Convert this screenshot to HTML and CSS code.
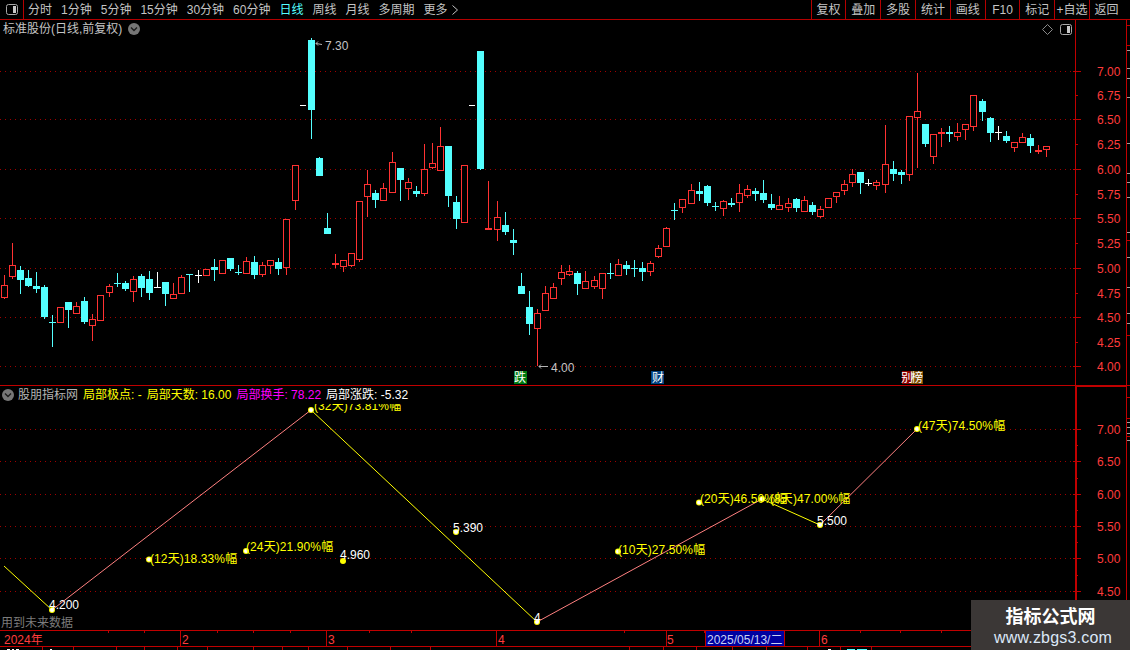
FILE: index.html
```html
<!DOCTYPE html>
<html lang="zh">
<head>
<meta charset="utf-8">
<title>标准股份 日线</title>
<link rel="stylesheet" href="styles.css">
</head>
<body>
<div class="app">
  <header class="toolbar">
    <div class="toolbar-icon">
      <svg class="panel-icon" width="12" height="11" viewBox="0 0 12 11"><rect class="panel-frame" x="0.5" y="0.5" width="11" height="10" rx="2"/><rect class="panel-bar" x="7" y="2" width="3" height="7"/></svg>
    </div>
    <nav class="periods">
      <span>分时</span><span>1分钟</span><span>5分钟</span><span>15分钟</span><span>30分钟</span><span>60分钟</span>
      <span class="active">日线</span><span>周线</span><span>月线</span><span>多周期</span>
      <span class="more">更多<svg width="6" height="10" viewBox="0 0 6 10"><path class="more-arrow" d="M0.5 0.5L5.5 5L0.5 9.5"/></svg></span>
    </nav>
    <nav class="tools">
      <span>复权</span><span>叠加</span><span>多股</span><span>统计</span><span>画线</span><span>F10</span><span>标记</span><span>+自选</span><span class="tool-last">返回</span>
    </nav>
  </header>

  <section class="pane pane-price">
    <div class="pane-title">
      <span class="stock">标准股份(日线,前复权)</span>
      <svg class="chev" width="12" height="12" viewBox="0 0 12 12"><circle class="chev-disc" cx="6" cy="6" r="6"/><path class="chev-mark" d="M3 4.5L6 7.5L9 4.5"/></svg>
      <span class="title-icons">
        <svg width="11" height="11" viewBox="0 0 11 11"><path class="diamond" d="M5.5 0.5L10.5 5.5L5.5 10.5L0.5 5.5Z"/></svg>
        <svg class="panel-icon" width="12" height="11" viewBox="0 0 12 11"><rect class="panel-frame" x="0.5" y="0.5" width="11" height="10" rx="2"/><rect class="panel-bar" x="7" y="2" width="3" height="7"/></svg>
      </span>
    </div>
    <svg class="canvas" width="1130" height="365" viewBox="0 20 1130 365">
      <path class="grid" d="M0 71.5H1075M0 119.5H1075M0 169.5H1075M0 218.5H1075M0 268.5H1075M0 317.5H1075M0 366.5H1075"/>
      <path class="axis" d="M1075.5 20V385M1126.5 20V385M1073 71.5h8M1073 119.5h8M1073 169.5h8M1073 218.5h8M1073 268.5h8M1073 317.5h8M1073 366.5h8M1076 95.5h2M1076 144.5h2M1076 194.5h2M1076 243.5h2M1076 293.5h2M1076 342.5h2M1127 25.5h3M1127 45.5h3M1127 240.5h3M1127 335.5h3"/>
      <path class="side-marks" d="M1127 50.5h3M1127 68.5h3M1127 78.5h3M1127 97.5h3M1127 143.5h3M1127 173.5h3M1127 182.5h3M1127 197.5h3M1127 232.5h3M1127 257.5h3M1127 287.5h3M1127 313.5h3M1127 323.5h3"/>
      <g id="candles"></g>
      <path class="note-line" d="M300 105.5h6M469 105.5h6"/>
      <path class="pointer" d="M322 44.5L316 43.5M316 43.5L318 41.5M316 43.5L318 45.5M548 366.5H539M539 366.5L541 364.5M539 366.5L541 368.5"/>
      <text class="t-note" x="325" y="49.5">7.30</text>
      <text class="t-note" x="551" y="371.5">4.00</text>
      <g class="t-axis">
        <text x="1097" y="75.5">7.00</text><text x="1097" y="100">6.75</text><text x="1097" y="124">6.50</text><text x="1097" y="149">6.25</text><text x="1097" y="174">6.00</text><text x="1097" y="199">5.75</text><text x="1097" y="223">5.50</text><text x="1097" y="248">5.25</text><text x="1097" y="273">5.00</text><text x="1097" y="298">4.75</text><text x="1097" y="322">4.50</text><text x="1097" y="347">4.25</text><text x="1097" y="371">4.00</text>
      </g>
      <rect class="b-green" x="514" y="371" width="13" height="13"/>
      <text class="t-badge" x="514" y="382">跌</text>
      <rect class="b-blue" x="651" y="371" width="13" height="13"/>
      <text class="t-badge" x="652" y="382">财</text>
      <rect class="b-red" x="902" y="371" width="9" height="13"/>
      <rect class="b-brown" x="911" y="371" width="12" height="13"/>
      <text class="t-badge" x="901" y="382">别</text>
      <text class="t-badge" x="911" y="382">榜</text>
    </svg>
  </section>

  <section class="pane pane-index">
    <div class="legend">
      <svg class="chev" width="12" height="12" viewBox="0 0 12 12"><circle class="chev-disc" cx="6" cy="6" r="6"/><path class="chev-mark" d="M3 4.5L6 7.5L9 4.5"/></svg>
      <span class="l-gray">股朋指标网</span>
      <span class="l-yellow">局部极点: -</span>
      <span class="l-yellow">局部天数: 16.00</span>
      <span class="l-magenta">局部换手: 78.22</span>
      <span class="l-white">局部涨跌: -5.32</span>
    </div>
    <svg class="canvas" width="1130" height="244" viewBox="0 386 1130 244">
      <path class="grid" d="M0 429.5H1075M0 461.5H1075M0 494.5H1075M0 526.5H1075M0 558.5H1075M0 591.5H1075"/>
      <path class="axis-thick" d="M1076 385V630M1075 386H1126"/>
      <path class="axis" d="M1126.5 386V630M1073 429.5h8M1073 461.5h8M1073 494.5h8M1073 526.5h8M1073 558.5h8M1073 591.5h8M1076 445.5h2M1076 478.5h2M1076 510.5h2M1076 542.5h2M1076 575.5h2M1076 608.5h2M1127 397.5h3M1127 418.5h3M1127 436.5h3"/>
      <path class="side-marks" d="M1127 422.5h3M1127 427.5h3M1127 433.5h3M1127 440.5h3"/>
      <path class="zig-up" d="M52 610L311 410M537 622L762 499M820 525L917 429"/>
      <path class="zig-down" d="M4 566L52 610M311 410L537 622M762 499L820 525"/>
      <g class="m-yellow">
        <circle cx="52" cy="610" r="3"/><circle cx="149" cy="559.5" r="3"/><circle cx="246" cy="551" r="3"/><circle cx="311" cy="410" r="3"/><circle cx="343" cy="561" r="3"/><circle cx="456" cy="532" r="3"/><circle cx="537" cy="622" r="3"/><circle cx="618" cy="551.5" r="3"/><circle cx="699" cy="502.5" r="3"/><circle cx="762" cy="499" r="3"/><circle cx="820" cy="525" r="3"/><circle cx="917" cy="429" r="3"/>
      </g>
      <g class="m-white">
        <circle cx="52" cy="610" r="2"/><circle cx="149" cy="559.5" r="2"/><circle cx="246" cy="551" r="2"/><circle cx="311" cy="410" r="2"/><circle cx="456" cy="532" r="2"/><circle cx="537" cy="622" r="2"/><circle cx="618" cy="551.5" r="2"/><circle cx="699" cy="502.5" r="2"/><circle cx="762" cy="499" r="2"/><circle cx="820" cy="525" r="2"/><circle cx="917" cy="429" r="2"/>
      </g>
      <g class="t-zig">
        <text x="150" y="562.5">(12天)18.33%幅</text>
        <text x="246" y="551">(24天)21.90%幅</text>
        <text x="314" y="410">(32天)73.81%幅</text>
        <text x="618" y="553.5">(10天)27.50%幅</text>
        <text x="700" y="503">(20天)46.50%幅</text>
        <text x="770" y="503">(8天)47.00%幅</text>
        <text x="918" y="429.5">(47天)74.50%幅</text>
      </g>
      <g class="t-price">
        <text x="49" y="608.5">4.200</text>
        <text x="340" y="559">4.960</text>
        <text x="453" y="531.5">5.390</text>
        <text x="534" y="621.5">4</text>
        <text x="817" y="524.5">5.500</text>
      </g>
      <g class="t-axis">
        <text x="1097" y="434">7.00</text><text x="1097" y="466">6.50</text><text x="1097" y="499">6.00</text><text x="1097" y="531">5.50</text><text x="1097" y="563">5.00</text><text x="1097" y="596">4.50</text>
      </g>
      <text class="t-future" x="1" y="626.5">用到未来数据</text>
    </svg>
  </section>

  <footer class="timeline">
    <svg class="canvas-static" width="1130" height="20" viewBox="0 630 1130 20">
      <path class="axis" d="M0 630.5H1130M0 646.5H1130M180.5 630V647M326.5 630V647M496.5 630V647M666.5 630V647M705.5 630V647M784.5 630V647M819.5 630V647"/>
      <path class="axis" d="M108.5 630v3M144.5 630v3M217.5 630v3M253.5 630v3M290.5 630v3M369.5 630v3M411.5 630v3M624.5 630v3M704.5 630v3M860.5 630v3M900.5 630v3M941.5 630v3"/>
      <path class="axis" d="M42.5 647v3M73.5 647v3M116.5 647v3M144.5 647v3M177.5 647v3M207.5 647v3M253.5 647v3M282.5 647v3M308.5 647v3M347.5 647v3M390.5 647v3M430.5 647v3M629.5 647v3M663.5 647v3M696.5 647v3M732.5 647v3M766.5 647v3M807.5 647v3M840.5 647v3M871.5 647v3"/>
      <path class="strip-white" d="M7 649.5h3M12 649.5h2M16 649.5h3M50 649.5h2M828 649.5h3"/>
      <path class="strip-cyan" d="M847 649.5h8M857 649.5h10"/>
      <rect class="date-box" x="706" y="631" width="78" height="15"/>
      <text class="t-time" x="4" y="643.5">2024年</text>
      <text class="t-time" x="182" y="643.5">2</text>
      <text class="t-time" x="328" y="643.5">3</text>
      <text class="t-time" x="498" y="643.5">4</text>
      <text class="t-time" x="667" y="643.5">5</text>
      <text class="t-date" x="707" y="643.5">2025/05/13/二</text>
      <text class="t-time" x="821" y="643.5">6</text>
    </svg>
  </footer>

  <aside class="watermark">
    <div class="wm-name">指标公式网</div>
    <div class="wm-url">www.zbgs3.com</div>
  </aside>
</div>
<script src="chart.js"></script>
</body>
</html>
```
FILE: styles.css
```css
* { box-sizing: border-box; }
html, body { margin: 0; padding: 0; background: #000; }
body { width: 1130px; height: 650px; overflow: hidden; }

.app {
  position: relative;
  width: 1130px;
  height: 650px;
  display: flex;
  flex-direction: column;
  background: #000;
  color: #c4c4c4;
  font: 12px/1 "Liberation Sans", "Noto Sans CJK SC", sans-serif;
  overflow: hidden;
}

/* toolbar */
.toolbar {
  flex: 0 0 20px;
  display: flex;
  align-items: stretch;
  border-bottom: 1px solid #b40000;
}
.toolbar-icon {
  flex: 0 0 24px;
  display: flex;
  align-items: center;
  justify-content: center;
  border-right: 1px solid #b40000;
}
.periods {
  flex: 1;
  display: flex;
  align-items: center;
  gap: 9px;
  padding-left: 4px;
}
.periods .active { color: #54ffff; }
.more { display: flex; align-items: center; gap: 4px; }
.more-arrow { fill: none; stroke: #c4c4c4; stroke-width: 1; }
.tools { display: flex; }
.tools span {
  width: 34.8px;
  display: flex;
  align-items: center;
  justify-content: center;
  border-left: 1px solid #b40000;
}
.tools .tool-last { width: 41px; padding-right: 7px; }

.panel-frame { fill: none; stroke: #a8a8a8; }
.panel-bar { fill: #c8c8c8; }

/* panes */
.pane { position: relative; }
.pane-price { flex: 0 0 366px; border-bottom: 1px solid #c00000; }
.pane-index { flex: 0 0 244px; }
.canvas { position: absolute; left: 0; top: 0; z-index: 0; }
.canvas-static { display: block; }

.pane-title {
  position: relative;
  z-index: 1;
  height: 18px;
  display: flex;
  align-items: center;
  gap: 6px;
  padding-left: 3px;
}
.title-icons {
  margin-left: auto;
  margin-right: 58px;
  display: flex;
  align-items: center;
  gap: 7px;
}
.diamond { fill: none; stroke: #8a8a8a; }
.chev-disc { fill: #767676; }
.chev-mark { fill: none; stroke: #1c1c1c; stroke-width: 1.4; }

.legend {
  position: relative;
  z-index: 1;
  width: 1075px;
  height: 18px;
  display: flex;
  align-items: center;
  gap: 5px;
  padding-left: 2px;
  background: #000;
}
.legend .chev { margin-right: -1px; }
.l-gray { color: #b4b4b4; }
.l-yellow { color: #ffff00; }
.l-magenta { color: #ff00ff; }
.l-white { color: #ffffff; }

/* chart drawing */
.canvas text, .canvas-static text { font: 12px "Liberation Sans", "Noto Sans CJK SC", sans-serif; }
.grid { fill: none; stroke: #a00000; stroke-dasharray: 1 4; shape-rendering: crispEdges; }
.axis { fill: none; stroke: #c00000; shape-rendering: crispEdges; }
.axis-thick { fill: none; stroke: #c00000; stroke-width: 2; shape-rendering: crispEdges; }
.side-marks { fill: none; stroke: #a0a0a0; shape-rendering: crispEdges; }
.note-line { fill: none; stroke: #fff; shape-rendering: crispEdges; }
.pointer { fill: none; stroke: #b4b4b4; }
.t-note { fill: #c4c4c4; }
.t-axis text { fill: #ff3c3c; }
.t-badge { fill: #fff; }
.b-green { fill: #007a10; }
.b-blue { fill: #004080; }
.b-red { fill: #8a0000; }
.b-brown { fill: #7d4c00; }

.wick-r, .wick-c, .wick-w { fill: none; shape-rendering: crispEdges; }
.wick-r { stroke: #ff3232; }
.wick-c { stroke: #54ffff; }
.wick-w { stroke: #ffffff; }
.body-r { fill: #000; stroke: #ff3232; shape-rendering: crispEdges; }
.body-c { fill: #54ffff; shape-rendering: crispEdges; }
.flat-r { fill: #ff3232; shape-rendering: crispEdges; }

.zig-up { fill: none; stroke: #ff8080; }
.zig-down { fill: none; stroke: #ffff00; }
.m-yellow { fill: #ffff00; }
.m-white { fill: #ffffff; }
.t-zig text { fill: #ffff00; letter-spacing: 0.1px; }
.t-price text { fill: #ffffff; }
.t-future { fill: #7c7c7c; }

/* time axis */
.timeline { flex: 0 0 20px; }
.date-box { fill: #0000a0; }
.t-time { fill: #ff3c3c; }
.t-date { fill: #c8d2f4; }
.strip-white { stroke: #fff; fill: none; shape-rendering: crispEdges; }
.strip-cyan { stroke: #54ffff; fill: none; shape-rendering: crispEdges; }

/* watermark */
.watermark {
  position: absolute;
  right: 0;
  bottom: 0;
  width: 159px;
  height: 50px;
  z-index: 2;
  background: #3b3736;
  display: flex;
  flex-direction: column;
  align-items: center;
  padding-top: 5px;
  gap: 4px;
}
.wm-name {
  font: bold 18px/20px "Noto Sans CJK SC", sans-serif;
  color: #ffffff;
}
.wm-url {
  font: 16px/18px "Liberation Sans", sans-serif;
  color: #dce8f8;
  letter-spacing: 0.2px;
  padding-left: 5px;
}
```
FILE: chart.js
```js
// x, high, low, bodyTop, bodyBottom, kind
// r = rising (hollow red), c = falling (cyan), w = white doji, f = flat red doji, d = cyan doji
var DATA = [
[4,275,299,285,297,'r'],[12,243,279,265,276,'r'],[20,266,294,270,280,'c'],[28,270,287,278,286,'c'],
[36,272,293,286,289,'c'],[44,285,319,287,317,'c'],[52,315,347,322,322,'d'],[60,307,323,307,322,'r'],
[68,302,328,302,310,'c'],[76,302,313,306,313,'r'],[84,297,324,301,322,'c'],[92,314,341,319,325,'r'],
[100,295,320,295,320,'r'],[109,284,297,286,292,'r'],[117,273,287,283,283,'d'],[125,281,291,283,289,'c'],
[133,276,302,279,291,'r'],[141,274,297,276,288,'c'],[149,271,300,279,293,'c'],[157,272,288,287,287,'w'],
[165,282,306,282,294,'c'],[173,283,298,294,298,'r'],[181,275,293,277,293,'r'],[189,274,292,274,274,'d'],
[198,270,283,275,275,'w'],[206,269,275,269,275,'r'],[214,259,281,267,270,'c'],[222,260,273,260,273,'r'],
[230,258,271,258,269,'c'],[238,265,275,272,272,'d'],[246,257,273,261,273,'r'],[254,256,279,262,275,'c'],
[262,262,277,265,274,'r'],[270,260,274,260,265,'r'],[278,258,275,262,269,'c'],[286,219,275,219,267,'r'],
[295,165,210,165,200,'r'],[311,38,139,40,110,'c'],[319,157,176,158,176,'c'],[327,213,234,228,234,'c'],
[335,254,268,263,263,'f'],[343,260,272,260,266,'r'],[351,253,267,253,265,'r'],[359,201,262,201,259,'r'],
[367,170,217,184,196,'r'],[375,190,208,193,200,'c'],[383,183,200,188,200,'r'],[392,152,193,162,192,'r'],
[400,168,201,168,180,'c'],[408,178,200,182,188,'r'],[416,186,197,191,194,'c'],[424,144,196,169,193,'r'],
[432,143,169,163,167,'r'],[440,127,170,146,170,'r'],[448,146,207,146,196,'c'],[456,196,229,202,219,'c'],
[464,165,223,165,222,'r'],[480,51,170,51,169,'c'],[488,181,229,228,228,'f'],[497,201,241,217,229,'r'],
[505,212,235,225,232,'c'],[513,229,255,240,243,'c'],[521,273,294,286,294,'c'],[529,291,335,307,324,'c'],
[537,309,366,313,328,'r'],[545,286,310,293,310,'r'],[553,283,298,287,298,'r'],[561,265,285,272,278,'r'],
[569,265,276,271,274,'r'],[577,271,295,273,284,'c'],[585,271,289,281,288,'r'],[594,276,289,280,286,'r'],
[602,273,299,273,288,'r'],[610,263,279,273,273,'d'],[618,259,275,264,275,'r'],[626,261,275,265,269,'c'],
[634,260,277,268,268,'d'],[642,262,281,268,272,'c'],[650,261,276,263,271,'r'],[658,245,258,248,256,'r'],
[666,227,246,228,246,'r'],[674,203,220,210,210,'d'],[682,199,213,199,207,'r'],[691,184,203,190,203,'r'],
[699,182,201,191,194,'c'],[707,185,206,186,203,'c'],[715,202,211,206,206,'d'],[723,200,216,201,208,'r'],
[731,198,207,203,205,'c'],[739,184,212,193,202,'r'],[747,185,198,189,195,'r'],[755,188,201,191,194,'c'],
[763,180,203,193,200,'c'],[771,194,210,204,208,'c'],[779,196,210,205,209,'r'],[788,198,212,203,207,'r'],
[796,198,212,199,208,'c'],[804,196,211,200,211,'r'],[812,202,215,205,212,'c'],[820,206,218,209,216,'r'],
[828,198,208,198,207,'r'],[836,192,203,192,196,'r'],[844,180,195,184,190,'r'],[852,169,187,174,182,'r'],
[860,172,194,172,183,'c'],[868,179,186,183,183,'w'],[876,180,190,182,185,'r'],[885,125,193,164,184,'r'],
[893,161,181,169,174,'c'],[901,170,184,172,175,'c'],[909,116,181,116,174,'r'],[917,73,168,111,117,'r'],
[925,124,147,124,144,'c'],[933,134,164,134,156,'r'],[941,128,147,132,132,'f'],[949,126,142,132,134,'c'],
[957,123,141,132,136,'r'],[965,124,140,124,129,'r'],[973,95,131,95,126,'r'],[982,99,121,101,112,'c'],
[990,117,142,118,133,'c'],[998,126,140,132,132,'w'],[1006,131,143,136,141,'c'],[1014,142,152,142,147,'r'],
[1022,133,142,137,142,'r'],[1030,134,153,138,146,'c'],[1038,145,154,150,150,'f'],[1046,146,157,146,149,'r']
];

var NS = 'http://www.w3.org/2000/svg';
var host = document.getElementById('candles');

function add(tag, cls, attrs) {
  var el = document.createElementNS(NS, tag);
  el.setAttribute('class', cls);
  for (var k in attrs) el.setAttribute(k, attrs[k]);
  host.appendChild(el);
}

DATA.forEach(function (c) {
  var x = c[0], hi = c[1], lo = c[2], top = c[3], bot = c[4], kind = c[5];
  var cx = x + 0.5;
  if (kind === 'r') {
    if (hi < top) add('path', 'wick-r', { d: 'M' + cx + ' ' + hi + 'V' + top });
    if (lo > bot) add('path', 'wick-r', { d: 'M' + cx + ' ' + bot + 'V' + lo });
    add('rect', 'body-r', { x: x - 3 + 0.5, y: top + 0.5, width: 6, height: bot - top });
  } else if (kind === 'c') {
    add('path', 'wick-c', { d: 'M' + cx + ' ' + hi + 'V' + lo });
    add('rect', 'body-c', { x: x - 3, y: top, width: 7, height: bot - top });
  } else if (kind === 'f') {
    add('path', 'wick-r', { d: 'M' + cx + ' ' + hi + 'V' + lo });
    add('rect', 'flat-r', { x: x - 3, y: top, width: 7, height: 2 });
  } else {
    var cls = kind === 'w' ? 'wick-w' : 'wick-c';
    add('path', cls, { d: 'M' + cx + ' ' + hi + 'V' + lo + 'M' + (x - 3) + ' ' + (top + 0.5) + 'h7' });
  }
});
```
